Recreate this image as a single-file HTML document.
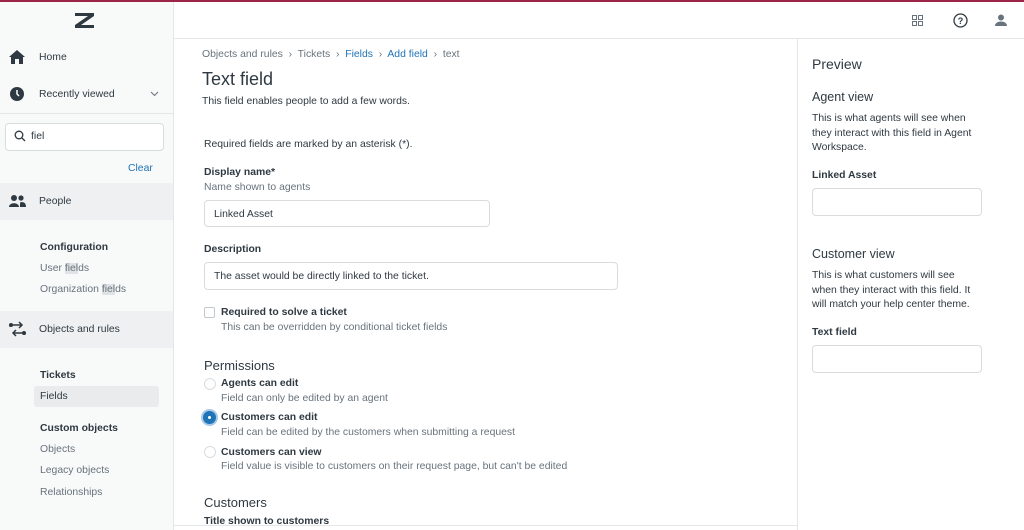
<!DOCTYPE html><html><head><style>
*{box-sizing:border-box;margin:0;padding:0}
body{width:1024px;height:530px;overflow:hidden;font-family:"Liberation Sans",sans-serif;color:#2f3941;background:#fff;position:relative;font-size:10.4px}
.abs{position:absolute}
.side{left:0;top:0;width:174px;height:530px;background:#f8f9f9;border-right:1px solid #e4e6e8}
.top{position:absolute;left:0;top:0;width:1024px;height:2px;background:#9c2448;z-index:5}
.hdr{left:174px;top:2px;width:850px;height:37px;border-bottom:1px solid #e4e6e8;background:#fff}
.b{font-weight:bold}
.g{color:#68737d}
.inp{border:1px solid #d8dcde;border-radius:4px;background:#fff}
.radio{width:12px;height:12px;border-radius:50%;border:1px solid #d8dcde;background:#fff}
</style></head><body>
<div class="top"></div>
<div class="abs side">
 <svg class="abs" style="left:75px;top:13px" width="19" height="15"><path d="M0 0h19v3L6 12h13v3H0v-3L13 3H0z" fill="#2f3941"/></svg>
 <svg class="abs" style="left:9px;top:50px" width="16" height="14" viewBox="0 0 16 14"><path d="M8 0L0 7h2v7h4V9h4v5h4V7h2z" fill="#2f3941"/></svg>
 <div class="abs" style="left:39px;top:52px">Home</div>
 <svg class="abs" style="left:10px;top:87px" width="14" height="14"><circle cx="7" cy="7" r="7" fill="#2f3941"/><path d="M7 3v4l2 2" stroke="#fff" stroke-width="1.5" fill="none"/></svg>
 <div class="abs" style="left:39px;top:89px">Recently viewed</div>
 <svg class="abs" style="left:150px;top:91px" width="9" height="6"><path d="M1 1l3.5 3.5L8 1" stroke="#68737d" fill="none"/></svg>
 <div class="abs" style="left:0;top:113px;width:173px;height:1px;background:#e4e6e8"></div>
 <div class="abs inp" style="left:5px;top:123px;width:159px;height:28px"></div>
 <svg class="abs" style="left:14px;top:130px" width="12" height="12"><circle cx="5" cy="5" r="3.8" stroke="#2f3941" stroke-width="1.3" fill="none"/><path d="M8 8l3 3" stroke="#2f3941" stroke-width="1.3"/></svg>
 <div class="abs" style="left:31px;top:131px">fiel</div>
 <div class="abs" style="left:128px;top:163px;color:#1f73b7">Clear</div>
 <div class="abs" style="left:0;top:183px;width:173px;height:37px;background:#eef0f1"></div>
 <svg class="abs" style="left:9px;top:195px" width="17" height="12"><circle cx="5" cy="3" r="3" fill="#2f3941"/><circle cx="12" cy="3" r="2.6" fill="#2f3941"/><path d="M0 12c0-5 10-5 10 0zM11 12c0-3 0-5 1-5 4 0 5 2 5 5z" fill="#2f3941"/></svg>
 <div class="abs" style="left:39px;top:196px">People</div>
 <div class="abs b" style="left:40px;top:242px">Configuration</div>
 <div class="abs g" style="left:40px;top:263px">User <span style="background:#e0e3e5">fiel</span>ds</div>
 <div class="abs g" style="left:40px;top:284px">Organization <span style="background:#e0e3e5">fiel</span>ds</div>
 <div class="abs" style="left:0;top:311px;width:173px;height:37px;background:#eef0f1"></div>
 <svg class="abs" style="left:9px;top:321px" width="17" height="16" fill="none" stroke="#2f3941" stroke-width="1.5"><path d="M1 4h12M10 1l3 3-3 3M16 12H4M7 9l-3 3 3 3"/><circle cx="2" cy="4" r="1.3"/><circle cx="15" cy="12" r="1.3"/></svg>
 <div class="abs" style="left:39px;top:324px">Objects and rules</div>
 <div class="abs b" style="left:40px;top:370px">Tickets</div>
 <div class="abs" style="left:34px;top:386px;width:125px;height:21px;background:#e9ebed;border-radius:3px"></div>
 <div class="abs" style="left:40px;top:391px">Fields</div>
 <div class="abs b" style="left:40px;top:423px">Custom objects</div>
 <div class="abs g" style="left:40px;top:444px">Objects</div>
 <div class="abs g" style="left:40px;top:465px">Legacy objects</div>
 <div class="abs g" style="left:40px;top:487px">Relationships</div>
</div>
<div class="abs hdr">
 <svg class="abs" style="left:738px;top:13px" width="11" height="11" fill="none" stroke="#68737d"><rect x=".5" y=".5" width="4" height="4"/><rect x="6.5" y=".5" width="4" height="4"/><rect x=".5" y="6.5" width="4" height="4"/><rect x="6.5" y="6.5" width="4" height="4"/></svg>
 <svg class="abs" style="left:779px;top:11px" width="15" height="15"><circle cx="7.5" cy="7.5" r="6.5" stroke="#2f3941" stroke-width="1.3" fill="none"/><text x="7.5" y="11" font-size="9" text-anchor="middle" font-family="Liberation Sans" font-weight="bold" fill="#2f3941">?</text></svg>
 <svg class="abs" style="left:821px;top:12px" width="12" height="12"><circle cx="6" cy="3.5" r="3" fill="#68737d"/><path d="M0 12c0-6 12-6 12 0z" fill="#68737d"/></svg>
</div>
<div class="abs" style="left:797px;top:39px;width:1px;height:491px;background:#e4e6e8"></div>
<div class="abs" style="left:174px;top:525px;width:623px;height:1px;background:#e4e6e8"></div>
<div class="abs g" style="left:202px;top:49px">Objects and rules &nbsp;›&nbsp; Tickets &nbsp;›&nbsp; <span style="color:#1f73b7">Fields</span> &nbsp;›&nbsp; <span style="color:#1f73b7">Add field</span> &nbsp;›&nbsp; text</div>
<div class="abs" style="left:202px;top:69px;font-size:18px">Text field</div>
<div class="abs" style="left:202px;top:96px">This field enables people to add a few words.</div>
<div class="abs" style="left:204px;top:139px">Required fields are marked by an asterisk (*).</div>
<div class="abs b" style="left:204px;top:167px">Display name*</div>
<div class="abs g" style="left:204px;top:182px">Name shown to agents</div>
<div class="abs inp" style="left:204px;top:200px;width:286px;height:27px"></div>
<div class="abs" style="left:214px;top:209px">Linked Asset</div>
<div class="abs b" style="left:204px;top:244px">Description</div>
<div class="abs inp" style="left:204px;top:262px;width:414px;height:28px"></div>
<div class="abs" style="left:214px;top:271px">The asset would be directly linked to the ticket.</div>
<div class="abs" style="left:204px;top:307px;width:11px;height:11px;border:1px solid #c2c8cc;border-radius:2px;background:#fff"></div>
<div class="abs b" style="left:221px;top:307px">Required to solve a ticket</div>
<div class="abs g" style="left:221px;top:322px">This can be overridden by conditional ticket fields</div>
<div class="abs" style="left:204px;top:358px;font-size:13px">Permissions</div>
<div class="abs radio" style="left:204px;top:378px"></div>
<div class="abs b" style="left:221px;top:378px">Agents can edit</div>
<div class="abs g" style="left:221px;top:393px">Field can only be edited by an agent</div>
<div class="abs radio" style="left:203px;top:411px;width:13px;height:13px;background:#1f73b7;border:none;box-shadow:0 0 0 2px #a9c9e6"></div>
<div class="abs" style="left:208px;top:416px;width:3px;height:3px;border-radius:50%;background:#fff"></div>
<div class="abs b" style="left:221px;top:412px">Customers can edit</div>
<div class="abs g" style="left:221px;top:427px">Field can be edited by the customers when submitting a request</div>
<div class="abs radio" style="left:204px;top:446px"></div>
<div class="abs b" style="left:221px;top:447px">Customers can view</div>
<div class="abs g" style="left:221px;top:461px">Field value is visible to customers on their request page, but can't be edited</div>
<div class="abs" style="left:204px;top:495px;font-size:13px">Customers</div>
<div class="abs b" style="left:204px;top:516px">Title shown to customers</div>
<div class="abs" style="left:812px;top:56px;font-size:14px">Preview</div>
<div class="abs" style="left:812px;top:90px;font-size:12.5px">Agent view</div>
<div class="abs" style="left:812px;top:112px;line-height:14.5px;width:168px">This is what agents will see when they interact with this field in Agent Workspace.</div>
<div class="abs b" style="left:812px;top:170px">Linked Asset</div>
<div class="abs inp" style="left:812px;top:188px;width:170px;height:28px"></div>
<div class="abs" style="left:812px;top:247px;font-size:12.5px">Customer view</div>
<div class="abs" style="left:812px;top:269px;line-height:14.5px;width:168px">This is what customers will see when they interact with this field. It will match your help center theme.</div>
<div class="abs b" style="left:812px;top:327px">Text field</div>
<div class="abs inp" style="left:812px;top:345px;width:170px;height:28px"></div>
</body></html>
